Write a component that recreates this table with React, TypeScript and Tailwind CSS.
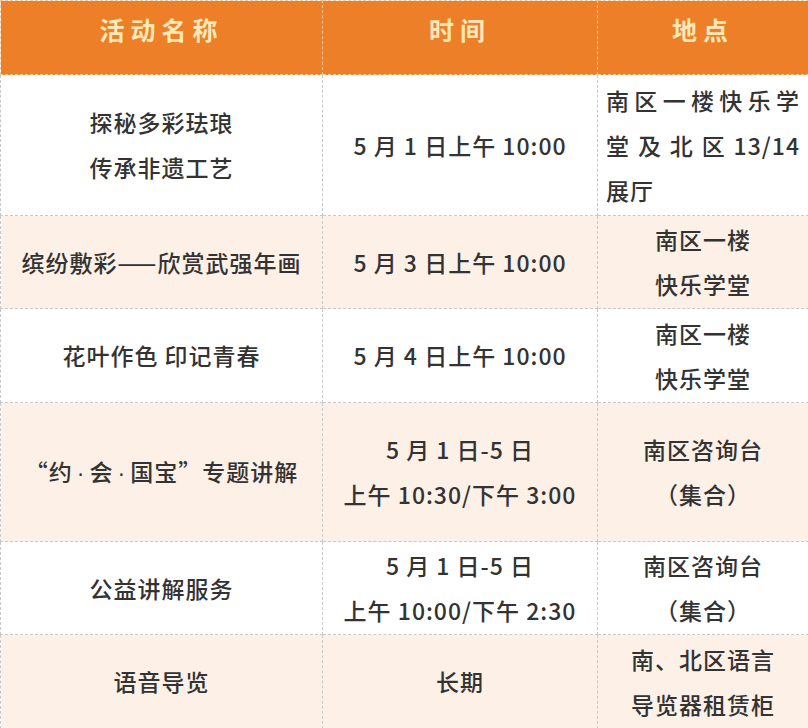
import React from "react";

type Row = {
  name: React.ReactNode;
  time: React.ReactNode;
  place: React.ReactNode;
  h: string;
  cream: boolean;
};

const dot = <span className="font-['Liberation_Sans',sans-serif] px-[4px]">·</span>;

const rows: Row[] = [
  {
    name: (
      <>
        探秘多彩珐琅
        <br />
        传承非遗工艺
      </>
    ),
    time: "5 月 1 日上午 10:00",
    place: (
      <div className="px-[8px] text-left">
        <span className="block text-justify [text-align-last:justify]">南区一楼快乐学</span>
        <span className="block text-justify [text-align-last:justify]">堂 及 北 区 13/14</span>
        <span className="block">展厅</span>
      </div>
    ),
    h: "h-[141px]",
    cream: false,
  },
  {
    name: "缤纷敷彩——欣赏武强年画",
    time: "5 月 3 日上午 10:00",
    place: (
      <>
        南区一楼
        <br />
        快乐学堂
      </>
    ),
    h: "h-[93px]",
    cream: true,
  },
  {
    name: "花叶作色 印记青春",
    time: "5 月 4 日上午 10:00",
    place: (
      <>
        南区一楼
        <br />
        快乐学堂
      </>
    ),
    h: "h-[94px]",
    cream: false,
  },
  {
    name: (
      <>
        “约{dot}会{dot}国宝”专题讲解
      </>
    ),
    time: (
      <>
        5 月 1 日-5 日
        <br />
        上午 10:30/下午 3:00
      </>
    ),
    place: (
      <>
        南区咨询台
        <br />
        （集合）
      </>
    ),
    h: "h-[139px]",
    cream: true,
  },
  {
    name: "公益讲解服务",
    time: (
      <>
        5 月 1 日-5 日
        <br />
        上午 10:00/下午 2:30
      </>
    ),
    place: (
      <>
        南区咨询台
        <br />
        （集合）
      </>
    ),
    h: "h-[93px]",
    cream: false,
  },
  {
    name: "语音导览",
    time: "长期",
    place: (
      <>
        南、北区语言
        <br />
        导览器租赁柜
      </>
    ),
    h: "h-[94px]",
    cream: true,
  },
];

export default function App() {
  const cell =
    "border border-dashed border-[#c8c8c8] p-0 text-center align-middle leading-[45px]";
  return (
    <div className="w-[808px] h-[728px] bg-white overflow-hidden font-['Noto_Sans_CJK_SC','Noto_Sans',sans-serif] text-[23px] font-medium text-[#333333] tracking-[1px]">
      <table className="w-[808px] table-fixed border-collapse">
        <colgroup>
          <col className="w-[322px]" />
          <col className="w-[275px]" />
          <col className="w-[211px]" />
        </colgroup>
        <thead>
          <tr className="h-[74px] bg-[#ec7f27]">
            {["活动名称", "时间", "地点"].map((t) => (
              <th
                key={t}
                className="border border-dashed border-[#f3c9a0] pb-[16px] text-center align-middle text-[25px] font-bold tracking-[6px] text-[#fbe8b8]"
              >
                {t}
              </th>
            ))}
          </tr>
        </thead>
        <tbody>
          {rows.map((r, i) => (
            <tr key={i} className={`${r.h} ${r.cream ? "bg-[#fcf0e7]" : "bg-white"}`}>
              <td className={cell}>{r.name}</td>
              <td className={cell}>{r.time}</td>
              <td className={cell}>{r.place}</td>
            </tr>
          ))}
        </tbody>
      </table>
    </div>
  );
}
